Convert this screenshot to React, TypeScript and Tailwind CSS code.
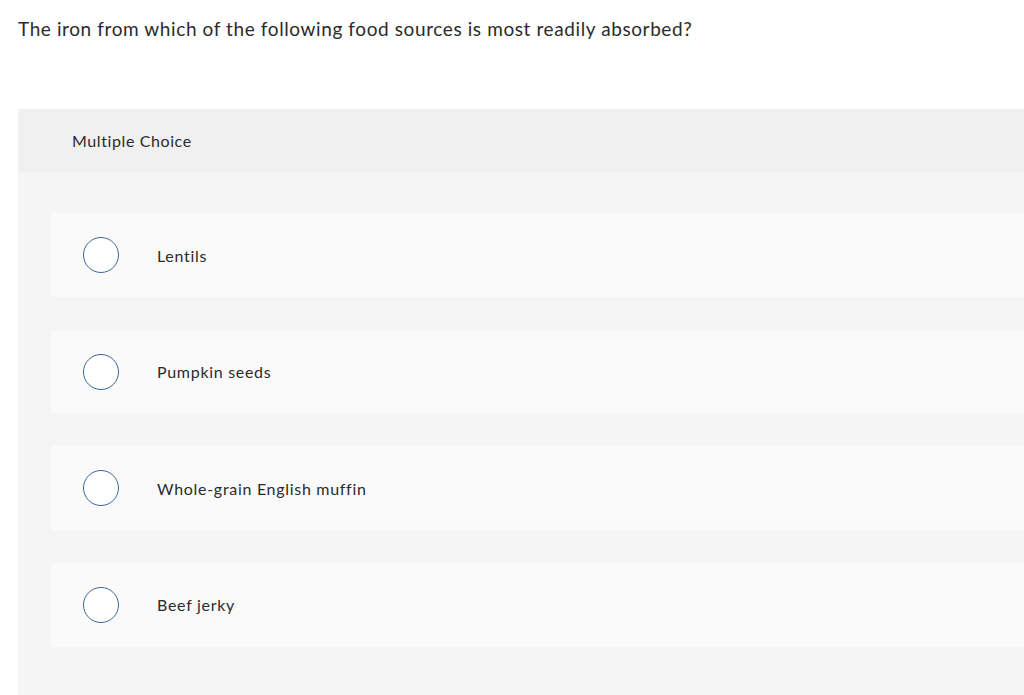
import React from "react";

const options = ["Lentils", "Pumpkin seeds", "Whole-grain English muffin", "Beef jerky"];

export default function App() {
  return (
    <div className="w-[1024px] h-[695px] overflow-hidden bg-white text-[#2b2b2b] [font-variant-ligatures:none]" style={{ fontFamily: "Lato, 'Open Sans', sans-serif" }}>
      <div className="pl-[18px] pt-[17px] text-[19px] leading-[24px] tracking-[0.6px]">
        The iron from which of the following food sources is most readily absorbed?
      </div>
      <div className="ml-[18px] mt-[68px] w-[1040px] bg-[#f5f5f5] h-[600px]">
        <div className="h-[63px] bg-[#f0f0f0] flex items-center pl-[54px] text-[16px] tracking-[0.6px]">Multiple Choice</div>
        <div className="pl-[33px] pt-[41px] flex flex-col gap-[32.5px]">
          {options.map((o) => (
            <div key={o} className="h-[84px] bg-[#fafafa] rounded-[3px] flex items-center">
              <div className="ml-[32px] w-[36px] h-[36px] rounded-full border-[1.5px] border-[#3d6499] bg-white" />
              <div className="ml-[38px] text-[16px] tracking-[0.7px] pt-[1px]">{o}</div>
            </div>
          ))}
        </div>
      </div>
    </div>
  );
}
